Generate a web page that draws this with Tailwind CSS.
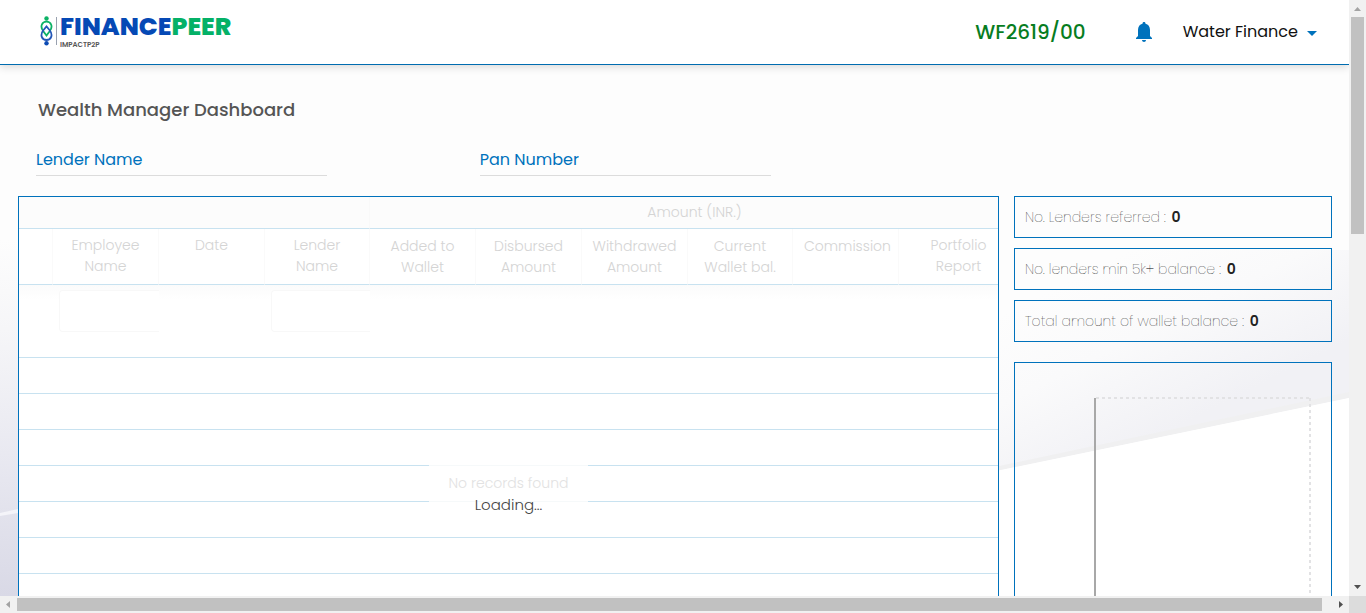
<!DOCTYPE html>
<html lang="en">
<head>
<meta charset="utf-8">
<meta name="viewport" content="width=device-width, initial-scale=1">
<title>Wealth Manager Dashboard</title>
<script src="https://cdn.jsdelivr.net/npm/@tailwindcss/browser@4"></script>
</head>
<body class="flex h-screen flex-col overflow-hidden bg-white font-['Poppins','Inter',sans-serif]">
<div class="flex min-h-0 flex-1">
  <div class="relative isolate flex min-w-0 flex-1 flex-col overflow-hidden bg-[#fdfdfd]">
    <!-- page backdrop -->
    <svg class="absolute inset-0 -z-10 h-full w-full" viewBox="0 0 1349 596" preserveAspectRatio="none" aria-hidden="true">
      <defs>
        <linearGradient id="left" gradientUnits="userSpaceOnUse" x1="0" y1="240" x2="0" y2="596">
          <stop offset="0" stop-color="#fdfdfd"/><stop offset=".25" stop-color="#f6f6f8"/><stop offset=".6" stop-color="#e9e9f1"/><stop offset="1" stop-color="#d9d9e6"/>
        </linearGradient>
        <linearGradient id="right" gradientUnits="userSpaceOnUse" x1="1090" y1="270" x2="1170" y2="430">
          <stop offset="0" stop-color="#fdfdfd"/><stop offset=".45" stop-color="#fafafb"/><stop offset="1" stop-color="#f1f1f5"/>
        </linearGradient>
      </defs>
      <path d="M0 240H18V596H0z" fill="url(#left)"/>
      <path d="M0 513 18 509V513L0 516z" fill="#f4f4f9"/>
      <path d="M900 250H1349V398L900 491z" fill="url(#right)"/>
      <path d="M900 487 1349 392V398L900 491z" fill="#f0f0f1"/>
      <path d="M900 491 1349 398V596H900z" fill="#fff"/>
    </svg>

    <header class="flex h-[65px] shrink-0 items-center border-b border-[#006cb0] bg-white pr-8 pl-10 shadow-[0_2px_8px_rgba(0,0,0,0.15)]">
      <a href="#" class="flex items-center gap-[3px] self-start pt-[13px]" aria-label="Financepeer ImpactP2P">
        <svg class="h-[30px] w-[13px]" viewBox="0 0 13 30" fill="none" stroke-width="1.8" aria-hidden="true">
          <circle cx="6.500" cy="2.500" r="2.200" fill="#0db266"/>
          <path d="M3.500 15.500C-.5 10.500 2 5.700 6.500 5.700S13.500 10.500 9.500 15.500L6.500 19.500 3.500 15.500" stroke="#0db266"/>
          <path d="M3.500 14C-.5 19 2 24 6.500 24S13.500 19 9.500 14L6.500 10.500 3.500 14" stroke="#2457b8"/>
          <circle cx="6.500" cy="27.300" r="2.200" fill="#0d4cb4"/>
        </svg>
        <span class="h-7 w-px bg-gray-400"></span>
        <span class="flex flex-col">
          <span class="text-[25px] leading-[28px] font-extrabold text-[#0549b5]">FINANCE<span class="text-[#04b167]">PEER</span></span>
          <span class="text-[7px] leading-[8px] font-semibold text-[#555]">IMPACTP2P</span>
        </span>
      </a>
      <span class="ml-auto text-xl font-medium text-[#077d1f]">WF2619/00</span>
      <button type="button" class="ml-[50px]" aria-label="Notifications">
        <svg class="h-5 w-4" viewBox="0 0 16 20" fill="#0072bc" aria-hidden="true"><path d="M8 0C9 0 9.500.7 9.500 1.700 12.300 2.300 14 4.500 14 8V14L16 16V17H0V16L2 14V8C2 4.500 3.700 2.300 6.500 1.700 6.500.7 7 0 8 0zM6 18H10C10 19.300 9 20 8 20S6 19.300 6 18z"/></svg>
      </button>
      <button type="button" class="ml-[31px] flex items-center gap-[9px] text-base text-[#111]">Water Finance
        <svg class="mt-[2px] h-[5px] w-[10px]" viewBox="0 0 10 5" fill="#0072bc" aria-hidden="true"><path d="M0 0H10L5 5z"/></svg>
      </button>
    </header>

    <main class="flex min-h-0 flex-1 flex-col pr-[17px] pl-[18px]">
      <h1 class="mt-[31px] pl-5 text-lg leading-7 font-medium text-[#555]">Wealth Manager Dashboard</h1>
      <form class="-mr-[17px] mt-[21px] grid grid-cols-3">
        <div class="px-[18px]"><input aria-label="Lender Name" placeholder="Lender Name" class="block h-[31px] w-[291px] border-b border-[#dcdcdc] pb-[2px] text-base outline-none placeholder:text-[#0072bc]"></div>
        <div class="px-[18px]"><input aria-label="Pan Number" placeholder="Pan Number" class="block h-[31px] w-[291px] border-b border-[#dcdcdc] pb-[2px] text-base outline-none placeholder:text-[#0072bc]"></div>
      </form>

      <div class="mt-5 flex min-h-0 flex-1 gap-[15px]">
        <section class="relative min-w-0 flex-1 overflow-hidden border border-b-0 border-[#0072bc] bg-white">
          <table class="w-[1000px] table-fixed border-separate border-spacing-0 text-center text-sm leading-[21px] text-[#d4d4d4]">
            <colgroup><col class="w-[34px]"><col class="w-[106px]"><col class="w-[106px]"><col class="w-[105px]"><col class="w-[106px]"><col class="w-[106px]"><col class="w-[106px]"><col class="w-[105px]"><col class="w-[106px]"><col class="w-[120px]"></colgroup>
            <thead>
              <tr class="h-8 bg-[#fcfcfc]">
                <th colspan="4" class="border-r border-b border-r-[#f9f9f9] border-b-[#c8e2f0]"></th>
                <th colspan="6" class="border-b border-[#c8e2f0] font-light">Amount (INR.)</th>
              </tr>
              <tr class="h-14 align-top *:border-r *:border-b *:border-r-[#fafafa] *:border-b-[#c8e2f0] *:font-light">
                <th></th><th class="pt-[6px]">Employee<br>Name</th><th class="pt-[6px]">Date</th><th class="pt-[6px]">Lender<br>Name</th><th class="pt-[7px]">Added to<br>Wallet</th><th class="pt-[7px]">Disbursed<br>Amount</th><th class="pt-[7px]">Withdrawed<br>Amount</th><th class="pt-[7px]">Current<br>Wallet bal.</th><th class="pt-[7px] pl-1">Commission</th><th class="pt-[6px]">Portfolio<br>Report</th>
              </tr>
            </thead>
            <tbody>
              <tr class="h-[73px] bg-linear-to-b from-[#fbfbfb] to-white to-20% align-top *:border-b *:border-[#c8e2f0]">
                <td></td>
                <td class="pt-[5px] pl-[6px]"><input aria-label="Filter by employee name" class="block h-[42px] w-full rounded-l border border-r-0 border-[#f8f8f8] bg-white"></td>
                <td></td>
                <td class="pt-[5px] pl-[6px]"><input aria-label="Filter by lender name" class="block h-[42px] w-full rounded-l border border-r-0 border-[#f8f8f8] bg-white"></td>
                <td></td><td></td><td></td><td></td><td></td><td></td>
              </tr>
              <tr class="h-9"><td colspan="10" class="border-b border-[#c8e2f0]"></td></tr>
              <tr class="h-9"><td colspan="10" class="border-b border-[#c8e2f0]"></td></tr>
              <tr class="h-9"><td colspan="10" class="border-b border-[#c8e2f0]"></td></tr>
              <tr class="h-9"><td colspan="10" class="border-b border-[#c8e2f0]"></td></tr>
              <tr class="h-9"><td colspan="10" class="border-b border-[#c8e2f0]"></td></tr>
              <tr class="h-9"><td colspan="10" class="border-b border-[#c8e2f0]"></td></tr>
              <tr class="h-9"><td colspan="10" class="border-b border-[#c8e2f0]"></td></tr>
            </tbody>
          </table>
          <!-- loading overlay -->
          <div class="absolute inset-x-0 top-[268px] flex flex-col items-center" role="status">
            <span class="border-y border-[#f6f9fa] bg-white px-5 text-sm leading-[35px] font-light text-[#e2e2e2]">No records found</span>
            <span class="-mt-2 text-[15px] leading-[21px] font-light text-[#444]">Loading...</span>
          </div>
        </section>

        <aside class="flex w-[318px] shrink-0 flex-col gap-[10px] text-sm font-extralight text-black">
          <p class="flex h-[42px] shrink-0 items-center gap-[6px] border border-[#0072bc] px-[10px]">No. Lenders referred : <b class="font-semibold text-[#222]">0</b></p>
          <p class="flex h-[42px] shrink-0 items-center gap-[6px] border border-[#0072bc] px-[10px]">No. lenders min 5k+ balance : <b class="font-semibold text-[#222]">0</b></p>
          <p class="flex h-[42px] shrink-0 items-center gap-[6px] border border-[#0072bc] px-[10px]">Total amount of wallet balance : <b class="font-semibold text-[#222]">0</b></p>
          <div class="mt-[10px] min-h-0 flex-1 overflow-hidden border border-b-0 border-[#0072bc] pt-[34px] pl-[79px]">
            <svg class="h-[300px] w-[218px]" viewBox="0 0 218 300" fill="none" stroke-width="2" aria-label="Chart area" role="img">
              <path d="M2 1H216M216 1V300" stroke="#e2e2e4" stroke-dasharray="3 3"/>
              <path d="M1 1V300" stroke="#a8a8a8"/>
            </svg>
          </div>
        </aside>
      </div>
    </main>
  </div>
  <!-- vertical scrollbar -->
  <div class="flex w-[17px] shrink-0 flex-col items-center bg-[#f1f1f1]" aria-hidden="true">
    <svg class="h-[17px] w-[17px] shrink-0" viewBox="0 0 17 17" fill="#a3a3a3"><path d="M5 11H12L8.500 7z"/></svg>
    <div class="h-[217px] w-[13px] bg-[#c1c1c1]"></div>
    <svg class="mt-auto h-[17px] w-[17px] shrink-0" viewBox="0 0 17 17" fill="#505050"><path d="M5 6H12L8.500 10z"/></svg>
  </div>
</div>
<!-- horizontal scrollbar -->
<div class="flex h-[17px] shrink-0 items-center bg-[#f1f1f1]" aria-hidden="true">
  <svg class="h-[17px] w-[17px] shrink-0" viewBox="0 0 17 17" fill="#a3a3a3"><path d="M10 5V12L6 8.500z"/></svg>
  <div class="mr-[10px] h-[13px] flex-1 bg-[#c1c1c1]"></div>
  <svg class="h-[17px] w-[17px] shrink-0" viewBox="0 0 17 17" fill="#505050"><path d="M7 5V12L11 8.500z"/></svg>
  <div class="h-full w-[17px] bg-[#dcdcdc]"></div>
</div>
</body>
</html>
